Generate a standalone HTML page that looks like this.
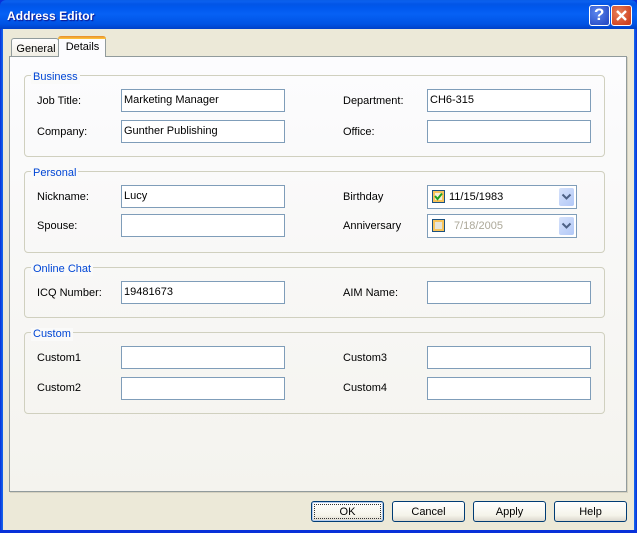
<!DOCTYPE html>
<html><head><meta charset="utf-8"><style>
html,body{margin:0;padding:0;width:637px;height:533px;overflow:hidden;background:#0831d9}
*{box-sizing:border-box}
body{font:11px "Liberation Sans",sans-serif;color:#000;position:relative}
div,span{position:absolute;white-space:nowrap}
#tb{left:0;top:0;width:637px;height:29px;background:linear-gradient(#0a5de8 0,#0a5fef 2px,#0255e6 4px,#0058ee 8px,#0661f5 14px,#0053e4 24px,#0040c8 29px);border-radius:6px 6px 0 0}
#title{left:7px;top:9px;color:#fff;font-weight:bold;font-size:12px;letter-spacing:.1px;text-shadow:1px 1px 1px #0f1089}
#lb{left:0;top:29px;width:3px;height:504px;background:linear-gradient(90deg,#0831d9,#166aee)}
#rb{left:634px;top:29px;width:3px;height:504px;background:linear-gradient(90deg,#166aee,#0831d9)}
#bb{left:0;top:530px;width:637px;height:3px;background:#0831d9}
#cl{left:3px;top:29px;width:631px;height:501px;background:#ece9d8}
#page{left:9px;top:56px;width:618px;height:436px;border:1px solid #919b9c;background:linear-gradient(#fcfcfe,#f4f3ee);box-shadow:1px 1px 0 #d5d1c0}
.tab{border:1px solid #919b9c;border-bottom:0;border-radius:3px 3px 0 0;text-align:center}
#t1{left:11px;top:38px;width:48px;height:18px;background:linear-gradient(#fff,#f0eee4);padding:4px 0 0 2px}
#t2{left:58px;top:36px;width:48px;height:21px;background:#fcfcfe;padding:5px 0 0 1px;border-top:0;border-radius:3px 3px 0 0}
#t2:before{content:"";position:absolute;left:-1px;right:-1px;top:0;height:3px;background:linear-gradient(#e68b2c,#ffc73c);border-radius:3px 3px 0 0}
.gb{left:24px;width:581px;border:1px solid #d0d0bf;border-radius:4px}
.gl{color:#0046d5;background:#fafaf9;padding:0 2px 0 2px;height:13px;line-height:13px;margin-top:1px}
.l{height:14px;line-height:14px}
.i{width:164px;height:23px;background:#fff;border:1px solid #7f9db9;padding:3px 0 0 2px;line-height:15px}
.d{left:427px;width:150px;height:24px;background:#fff;border:1px solid #7f9db9;line-height:15px}
.cb{left:4px;top:4px;width:13px;height:13px;border:1px solid #1c5180;background:#f5efd8;box-shadow:inset 0 0 0 2px #f8c45a}
.dd{left:131px;top:2px;width:15px;height:18px;background:linear-gradient(135deg,#d6e2fb,#b2c8f7);border-radius:2px}
.btn{top:501px;width:73px;height:21px;border:1px solid #003c74;border-radius:3px;background:linear-gradient(#fff,#f5f4ea 70%,#dcd8ce);text-align:center;line-height:20px}
.cap{width:21px;height:21px;border:1px solid #fff;border-radius:3px}
</style></head><body>
<div id="tb"></div><div id="title">Address Editor</div>
<div class="cap" style="left:589px;top:5px;background:radial-gradient(circle at 35% 35%,#5c86ee,#2a4fc8 80%)"><span style="left:4px;top:-1px;color:#fff;font-weight:bold;font-size:17px;line-height:20px">?</span></div>
<div class="cap" style="left:611px;top:5px;background:radial-gradient(circle at 35% 35%,#e8805a,#cf4220 80%)"><svg width="19" height="19" style="position:absolute;left:0;top:0"><path d="M5 5L14 14M14 5L5 14" stroke="#fff" stroke-width="2.4" fill="none"/></svg></div>
<div id="lb"></div><div id="rb"></div><div id="cl"></div><div id="bb"></div>
<div id="t1" class="tab">General</div>
<div id="page"></div>
<div id="t2" class="tab">Details</div>

<div class="gb" style="top:75px;height:82px"></div>
<div class="gl" style="left:31px;top:70px">Business</div>
<div class="gb" style="top:171px;height:82px"></div>
<div class="gl" style="left:31px;top:166px">Personal</div>
<div class="gb" style="top:267px;height:51px"></div>
<div class="gl" style="left:31px;top:262px">Online Chat</div>
<div class="gb" style="top:332px;height:82px"></div>
<div class="gl" style="left:31px;top:327px">Custom</div>

<div class="l" style="left:37px;top:94px">Job Title:</div>
<div class="i" style="left:121px;top:89px">Marketing Manager</div>
<div class="l" style="left:343px;top:94px">Department:</div>
<div class="i" style="left:427px;top:89px">CH6-315</div>
<div class="l" style="left:37px;top:125px">Company:</div>
<div class="i" style="left:121px;top:120px">Gunther Publishing</div>
<div class="l" style="left:343px;top:125px">Office:</div>
<div class="i" style="left:427px;top:120px"></div>

<div class="l" style="left:37px;top:190px">Nickname:</div>
<div class="i" style="left:121px;top:185px">Lucy</div>
<div class="l" style="left:343px;top:190px">Birthday</div>
<div class="d" style="top:185px"><div class="cb"><svg width="11" height="11" style="position:absolute;left:0;top:0"><path d="M2 5L4.500 8L9 2.500" stroke="#21a121" stroke-width="2" fill="none"/></svg></div><span style="left:21px;top:4px">11/15/1983</span><div class="dd"><svg width="15" height="18" style="position:absolute;left:0;top:0"><path d="M3.500 6.500L7.500 10.500L11.500 6.500" stroke="#4d6185" stroke-width="2" fill="none"/></svg></div></div>
<div class="l" style="left:37px;top:219px">Spouse:</div>
<div class="i" style="left:121px;top:214px"></div>
<div class="l" style="left:343px;top:219px">Anniversary</div>
<div class="d" style="top:214px"><div class="cb" style="background:#e6e4d8"></div><span style="left:26px;top:4px;color:#aca899">7/18/2005</span><div class="dd"><svg width="15" height="18" style="position:absolute;left:0;top:0"><path d="M3.500 6.500L7.500 10.500L11.500 6.500" stroke="#4d6185" stroke-width="2" fill="none"/></svg></div></div>

<div class="l" style="left:37px;top:286px">ICQ Number:</div>
<div class="i" style="left:121px;top:281px">19481673</div>
<div class="l" style="left:343px;top:286px">AIM Name:</div>
<div class="i" style="left:427px;top:281px"></div>

<div class="l" style="left:37px;top:351px">Custom1</div>
<div class="i" style="left:121px;top:346px"></div>
<div class="l" style="left:343px;top:351px">Custom3</div>
<div class="i" style="left:427px;top:346px"></div>
<div class="l" style="left:37px;top:381px">Custom2</div>
<div class="i" style="left:121px;top:377px"></div>
<div class="l" style="left:343px;top:381px">Custom4</div>
<div class="i" style="left:427px;top:377px"></div>

<div class="btn" style="left:311px;box-shadow:inset 0 0 0 1px #b5cdf0">OK<div style="left:2px;top:2px;width:67px;height:15px;border:1px dotted #333"></div></div>
<div class="btn" style="left:392px">Cancel</div>
<div class="btn" style="left:473px">Apply</div>
<div class="btn" style="left:554px">Help</div>
</body></html>
